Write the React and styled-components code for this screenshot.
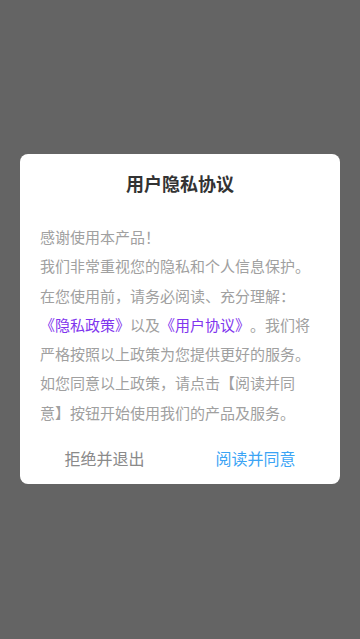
import React from "react";
import styled, { createGlobalStyle } from "styled-components";

const GlobalStyle = createGlobalStyle`
    html, body {
        margin: 0;
        padding: 0;
        background: #646464;
        font-family: "Noto Sans CJK SC", "Noto Sans", sans-serif;
    }
`;

function App(){
    return (
        <Overlay>
            <GlobalStyle />
            <Dialog>
                <Title>用户隐私协议</Title>
                <Body>
                    感谢使用本产品！<br />
                    我们非常重视您的隐私和个人信息保护。在您使用前，请务必阅读、充分理解：
                    <Link>《隐私政策》</Link>以及<Link>《用户协议》</Link>。我们将严格按照以上政策为您提供更好的服务。如您同意以上政策，请点击【阅读并同意】按钮开始使用我们的产品及服务。
                </Body>
                <Actions>
                    <ActionButton>拒绝并退出</ActionButton>
                    <ActionButton primary>阅读并同意</ActionButton>
                </Actions>
            </Dialog>
        </Overlay>
    )
}

const Overlay = styled.div`
    width: 360px;
    height: 639px;
    display: flex;
    align-items: flex-start;
    justify-content: center;
    padding-top: 154px;
    box-sizing: border-box;
    background: #646464;
`;

const Dialog = styled.div`
    width: 320px;
    height: 330px;
    box-sizing: border-box;
    background: #ffffff;
    border-radius: 8px;
    padding: 16px 0 4px;
    display: flex;
    flex-direction: column;
`;

const Title = styled.div`
    font-size: 18px;
    font-weight: 700;
    line-height: 26px;
    color: #333333;
    text-align: center;
`;

const Body = styled.div`
    margin-top: 26px;
    padding: 0 20px;
    font-size: 15px;
    line-height: 29.3px;
    color: #a0a0a0;
    line-break: strict;
    text-spacing-trim: space-all;
`;

const Link = styled.span`
    color: #7f35ee;
`;

const Actions = styled.div`
    display: flex;
    margin-top: auto;
    padding: 0 9px;
`;

const ActionButton = styled.div`
    flex: 1;
    height: 44px;
    display: flex;
    align-items: center;
    justify-content: center;
    font-size: 16px;
    color: ${props => props.primary ? "#3ba4f5" : "#8a8a8a"};
`;

export default App;
